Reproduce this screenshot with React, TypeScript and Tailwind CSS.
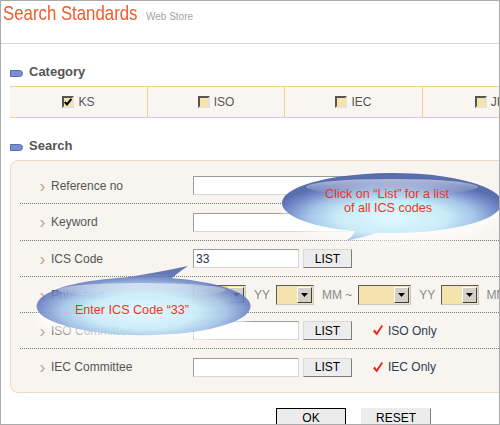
import React from "react";

const Bullet = () => (
  <svg width="5" height="7" viewBox="0 0 5 7" className="shrink-0 mt-[3px]">
    <polygon points="0,0 2,0 5,3.5 2,7 0,7 3,3.5" fill="#c9ab9c" />
  </svg>
);

const Label = ({ children }: { children: React.ReactNode }) => (
  <div className="w-[173px] shrink-0 flex items-center pl-[20px] gap-[6px] text-[12px] text-[#555555]">
    <Bullet />
    <span>{children}</span>
  </div>
);

const TextInput = ({ className, value }: { className: string; value?: string }) => (
  <div
    className={
      "h-[19px] shrink-0 bg-white border border-t-[#9c9c9c] border-l-[#9c9c9c] border-b-[#d6d6d6] border-r-[#d6d6d6] flex items-center pl-[2px] text-[12px] text-[#2a2f4a] " +
      className
    }
  >
    {value}
  </div>
);

const ListButton = () => (
  <div className="ml-[4px] h-[19px] w-[49px] shrink-0 bg-[#ececec] border border-t-[#d8d8d8] border-l-[#d8d8d8] border-b-[#7c7c7c] border-r-[#7c7c7c] flex items-center justify-center text-[12px] text-black">
    LIST
  </div>
);

const Select = ({ className }: { className: string }) => (
  <div
    className={
      "h-[20px] shrink-0 flex border border-t-[#5a5a5a] border-l-[#5a5a5a] border-b-[#c8c8c8] border-r-[#c8c8c8] bg-[#f5e3ad] p-[1px] " +
      className
    }
  >
    <div className="flex-1" />
    <div className="w-[15px] h-full bg-[#d4d0c8] border border-t-white border-l-white border-b-[#404040] border-r-[#404040] flex items-center justify-center">
      <svg width="7" height="4" viewBox="0 0 7 4">
        <polygon points="0,0 7,0 3.5,4" fill="#000" />
      </svg>
    </div>
  </div>
);

const RedCheck = () => (
  <svg width="10" height="11" viewBox="0 0 10 11" className="shrink-0">
    <path d="M0 6.2 L1.8 4.6 L3.6 7.2 L8.6 0 L10 1.1 L3.9 10.6 Z" fill="#e52b1f" />
  </svg>
);

const CheckBox = ({ checked }: { checked?: boolean }) => (
  <div className="w-[12px] h-[12px] shrink-0 bg-[#f5e3a8] border-2 border-t-[#555555] border-l-[#555555] border-b-[#e6e2da] border-r-[#e6e2da] flex items-center justify-center">
    {checked && (
      <svg width="8" height="8" viewBox="0 0 8 8">
        <path d="M0.8 3.8 L3 6.4 L7.4 0.8" stroke="#000" strokeWidth="2" fill="none" />
      </svg>
    )}
  </div>
);

const Heading = ({ children }: { children: React.ReactNode }) => (
  <div className="flex items-center h-[20px] pl-[9px] gap-[6px]">
    <svg width="13" height="7" viewBox="0 0 13 7" className="shrink-0 mt-[3px]">
      <path d="M0.5 0.5 H9.5 Q12.5 0.5 12.5 3.5 Q12.5 6.5 9.5 6.5 H0.5 Z" fill="#7b8fd0" stroke="#5a6cb0" />
    </svg>
    <span className="text-[13px] font-bold text-[#555555] leading-[20px]">{children}</span>
  </div>
);

export default function App() {
  const cats = [
    { name: "KS", checked: true, w: "w-[138px]" },
    { name: "ISO", checked: false, w: "w-[137px]" },
    { name: "IEC", checked: false, w: "w-[138px]" },
    { name: "JIS", checked: false, w: "w-[138px]" },
  ];
  return (
    <div className="w-[500px] h-[425px] relative overflow-hidden bg-white border border-[#aaaaaa] font-['Liberation_Sans',Arial,sans-serif]">
      {/* header */}
      <div className="h-[43px] border-b border-[#d6d6d6] flex items-baseline pl-[2px] whitespace-nowrap">
        <div className="w-[143px] shrink-0">
          <span className="inline-block scale-x-[0.8] origin-left text-[21px] leading-[24px] text-[#f15a2b]">
            Search Standards
          </span>
        </div>
        <span className="text-[10px] text-[#a3a3a3]">Web Store</span>
      </div>

      {/* category */}
      <div className="mt-[18px]">
        <Heading>Category</Heading>
      </div>
      <div className="mt-[4px] ml-[9px] flex h-[32px] w-[600px] bg-[#f9f5f1] border-y border-[#f5cf85]">
        {cats.map((c) => (
          <div
            key={c.name}
            className={"shrink-0 h-full border-r border-[#f5cf85] flex items-center justify-center gap-[4px] text-[12px] text-[#555555] " + c.w}
          >
            <CheckBox checked={c.checked} />
            <span>{c.name}</span>
          </div>
        ))}
      </div>

      {/* search */}
      <div className="mt-[18px]">
        <Heading>Search</Heading>
      </div>
      <div className="mt-[4px] ml-[9px] w-[600px] h-[233px] bg-[#f8f4f0] border border-[#e8dcc2] rounded-l-[8px] pt-[7px] pl-[9px]">
        <div className="flex items-center h-[36px] border-b border-dotted border-[#777777] whitespace-nowrap">
          <Label>Reference no</Label>
          <TextInput className="w-[158px]" />
        </div>
        <div className="flex items-center h-[37px] border-b border-dotted border-[#777777] whitespace-nowrap">
          <Label>Keyword</Label>
          <TextInput className="w-[158px]" />
        </div>
        <div className="flex items-center h-[36px] border-b border-dotted border-[#777777] whitespace-nowrap">
          <Label>ICS Code</Label>
          <TextInput className="w-[106px]" value="33" />
          <ListButton />
        </div>
        <div className="flex items-center h-[36px] border-b border-dotted border-[#777777] whitespace-nowrap text-[12px] text-[#8a8a8a]">
          <Label>Published</Label>
          <Select className="w-[53px]" />
          <span className="ml-[8px] mr-[6px]">YY</span>
          <Select className="w-[38px]" />
          <span className="ml-[8px] mr-[6px]">MM ~</span>
          <Select className="w-[53px]" />
          <span className="ml-[8px] mr-[6px]">YY</span>
          <Select className="w-[38px]" />
          <span className="ml-[7px]">MM</span>
        </div>
        <div className="flex items-center h-[36px] border-b border-dotted border-[#777777] whitespace-nowrap">
          <Label>ISO Committee</Label>
          <TextInput className="w-[106px]" />
          <ListButton />
          <div className="ml-[21px] flex items-center gap-[5px] text-[12px] text-[#2c3d4f]">
            <RedCheck />
            <span>ISO Only</span>
          </div>
        </div>
        <div className="flex items-center h-[36px] whitespace-nowrap">
          <Label>IEC Committee</Label>
          <TextInput className="w-[106px]" />
          <ListButton />
          <div className="ml-[21px] flex items-center gap-[5px] text-[12px] text-[#2c3d4f]">
            <RedCheck />
            <span>IEC Only</span>
          </div>
        </div>
      </div>

      {/* buttons */}
      <div className="mt-[15px] pl-[275px] flex gap-[15px]">
        <div className="w-[70px] h-[20px] bg-[#ececec] border border-black flex items-center justify-center text-[12px] text-black">
          OK
        </div>
        <div className="w-[70px] h-[20px] bg-[#ececec] border border-t-[#ececec] border-l-[#ececec] border-b-[#7c7c7c] border-r-[#7c7c7c] flex items-center justify-center text-[12px] text-black">
          RESET
        </div>
      </div>

      {/* callout bubbles */}
      <svg
        className="absolute left-[-1px] top-[-1px] pointer-events-none"
        width="500"
        height="425"
        viewBox="0 0 500 425"
      >
        <defs>
          <radialGradient id="bg" cx="0.5" cy="0.66" r="0.56">
            <stop offset="0" stopColor="#e0f8fe" />
            <stop offset="0.45" stopColor="#c4eaf8" />
            <stop offset="0.68" stopColor="#9cbfe4" />
            <stop offset="0.86" stopColor="#6a84c6" />
            <stop offset="1" stopColor="#4c62a8" />
          </radialGradient>
          <linearGradient id="hl" x1="0" y1="0" x2="0" y2="1">
            <stop offset="0" stopColor="#ffffff" stopOpacity="0.55" />
            <stop offset="1" stopColor="#ffffff" stopOpacity="0" />
          </linearGradient>
          <filter id="blur" x="-20%" y="-50%" width="140%" height="200%">
            <feGaussianBlur stdDeviation="4" />
          </filter>
        </defs>

        {/* bubble 1 */}
        <ellipse cx="392" cy="213" rx="108" ry="30" fill="#ffffff" opacity="0.7" filter="url(#blur)" />
        <path
          d="M355 231.3 Q352 238 345 241 Q362 238 378 232.8 A110 30 0 1 0 355 231.3 Z"
          fill="url(#bg)"
          opacity="0.92"
        />
        <ellipse cx="392" cy="187" rx="86" ry="8" fill="url(#hl)" />
        <text x="387" y="198" textAnchor="middle" fontSize="12.6" fill="#ee3322" fontFamily="Liberation Sans, Arial, sans-serif">
          Click on “List” for a list
        </text>
        <text x="388" y="212" textAnchor="middle" fontSize="12.6" fill="#ee3322" fontFamily="Liberation Sans, Arial, sans-serif">
          of all ICS codes
        </text>

        {/* bubble 2 */}
        <ellipse cx="142" cy="316" rx="105" ry="28" fill="#ffffff" opacity="0.7" filter="url(#blur)" />
        <path
          d="M125 277.6 Q160 272 188 266 Q176 274 172 278.2 A107 29 0 1 1 125 277.6 Z"
          fill="url(#bg)"
          opacity="0.86"
        />
        <ellipse cx="142" cy="290" rx="84" ry="7" fill="url(#hl)" />
        <text x="132" y="314" textAnchor="middle" fontSize="12.6" fill="#ee3322" fontFamily="Liberation Sans, Arial, sans-serif">
          Enter ICS Code “33”
        </text>
      </svg>
    </div>
  );
}
